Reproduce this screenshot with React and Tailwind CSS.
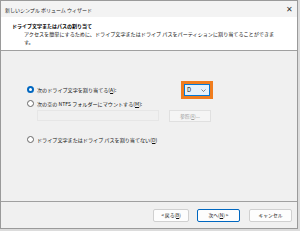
export default function App() {
  const font = { fontFamily: '"Noto Sans CJK JP", "Noto Sans", sans-serif' };
  const Radio = ({ checked }) => (
    <span
      className={
        "inline-block w-[7px] h-[7px] rounded-full border bg-white shrink-0 " +
        (checked ? "border-[#0067c0] border-[2px]" : "border-[#666]")
      }
    />
  );
  return (
    <div className="w-[300px] h-[231px] bg-[#dcdcdc]" style={font}>
      <div className="w-[298px] h-[229px] border border-[#9a9a9a] bg-[#f0f0f0] flex flex-col overflow-hidden">
        {/* title bar */}
        <div className="h-[16px] bg-[#f3f3f3] flex items-center justify-between pl-[4px] pr-[4px] shrink-0">
          <span className="text-[5px] text-[#222] leading-none">新しいシンプル ボリューム ウィザード</span>
          <span className="text-[8px] text-[#333] leading-none">✕</span>
        </div>
        {/* header */}
        <div className="h-[34px] bg-white border-b border-[#a0a0a0] pl-[11px] pt-[5px] shrink-0">
          <div className="text-[5px] font-bold text-black leading-[8px]">ドライブ文字またはパスの割り当て</div>
          <div className="pl-[12px] text-[5.1px] text-[#111] leading-[8px]">
            アクセスを簡単にするために、ドライブ文字またはドライブ パスをパーティションに割り当てることができま
            <br />す。
          </div>
        </div>
        {/* body */}
        <div className="flex-1 pl-[26px] pr-[84px] pt-[30px] text-[5.1px] text-[#111]">
          <div className="flex items-center justify-between h-[18px]">
            <div className="flex items-center gap-[3px]">
              <Radio checked />
              <span>次のドライブ文字を割り当てる(<u>A</u>):</span>
            </div>
            <div className="border-[3px] border-[#f07d1e] w-[32px] h-[18px] flex">
              <div className="flex-1 bg-[#e5f1fb] border border-[#0078d7] flex items-center justify-between pl-[2px] pr-[3px]">
                <span className="text-[6px] leading-none">D</span>
                <svg width="5" height="3" viewBox="0 0 5 3">
                  <path d="M0.5 0.5 L2.5 2.5 L4.5 0.5" fill="none" stroke="#555" strokeWidth="0.7" />
                </svg>
              </div>
            </div>
          </div>
          <div className="flex items-center gap-[3px] mt-[1px]">
            <Radio />
            <span>次の空の NTFS フォルダーにマウントする(<u>M</u>):</span>
          </div>
          <div className="flex items-center mt-[2px] pl-[10px] gap-[10px]">
            <div className="w-[122px] h-[11px] border border-[#e6e6e6] bg-[#f0f0f0]" />
            <div className="w-[42px] h-[12px] border border-[#e0e0e0] bg-[#f5f5f5] flex items-center justify-center text-[4.8px] text-[#a0a0a0]">
              参照(<u>R</u>)...
            </div>
          </div>
          <div className="flex items-center gap-[3px] mt-[14px]">
            <Radio />
            <span>ドライブ文字またはドライブ パスを割り当てない(<u>D</u>)</span>
          </div>
        </div>
        {/* footer */}
        <div className="h-[27px] border-t border-[#a0a0a0] flex items-center justify-end pr-[5px] shrink-0">
          <div className="w-[36px] h-[13px] bg-[#fdfdfd] border border-[#d0d0d0] rounded-[2px] flex items-center justify-center text-[4.8px] text-[#111]">
            &lt; 戻る(<u>B</u>)
          </div>
          <div className="ml-[8px] w-[43px] h-[13px] bg-[#fdfdfd] border border-[#0067c0] rounded-[2px] flex items-center justify-center text-[4.8px] text-[#111]">
            次へ(<u>N</u>) &gt;
          </div>
          <div className="ml-[9px] w-[43px] h-[13px] bg-[#fdfdfd] border border-[#d0d0d0] rounded-[2px] flex items-center justify-center text-[4.8px] text-[#111]">
            キャンセル
          </div>
        </div>
      </div>
    </div>
  );
}
